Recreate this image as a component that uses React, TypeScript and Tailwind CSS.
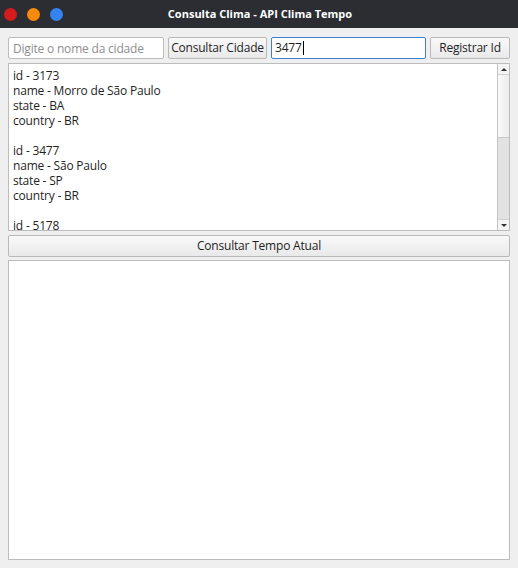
const lines = [
  "id - 3173",
  "name - Morro de São Paulo",
  "state - BA",
  "country - BR",
  "",
  "id - 3477",
  "name - São Paulo",
  "state - SP",
  "country - BR",
  "",
  "id - 5178",
  "name - Rio Branco",
  "state - AC",
  "country - BR",
];

export default function App() {
  return (
    <div
      className="w-[518px] h-[568px] bg-[#efefef] flex flex-col text-[12px] text-[#1f1f1f] tracking-[-0.2px]"
      style={{ fontFamily: "'Open Sans', 'Noto Sans', sans-serif" }}
    >
      {/* title bar */}
      <div className="h-[28px] bg-[#2c2d33] flex items-center relative shrink-0">
        <div className="flex items-center gap-[10px] pl-[4px]">
          <span className="w-[13px] h-[13px] rounded-full bg-[#d41c1c]" />
          <span className="w-[13px] h-[13px] rounded-full bg-[#f78a0c]" />
          <span className="w-[13px] h-[13px] rounded-full bg-[#3583f0]" />
        </div>
        <div className="absolute inset-0 flex items-center justify-center text-white font-bold text-[11px] pl-[2px] tracking-normal">
          Consulta Clima - API Clima Tempo
        </div>
      </div>

      <div className="flex flex-col px-[8px] pt-[9px] pb-[8px] flex-1">
        {/* top row */}
        <div className="flex items-center gap-[4px] h-[22px]">
          <input
            placeholder="Digite o nome da cidade"
            className="w-[156px] h-[22px] bg-white border border-[#bcbcbc] rounded-[2px] px-[4px] text-[12px] outline-none placeholder:text-[#8e8e8e]"
          />
          <button className="w-[99px] h-[22px] border border-[#b9b9b9] rounded-[2px] bg-gradient-to-b from-[#f9f9f9] to-[#e9e9e9] text-[12px] text-[#1f1f1f]">
            Consultar Cidade
          </button>
          <div className="w-[155px] h-[22px] bg-white border border-[#3d7fd6] rounded-[2px] px-[3px] flex items-center">
            <span>3477</span>
            <span className="w-px h-[14px] bg-black ml-[1px]" />
          </div>
          <button className="w-[80px] h-[22px] border border-[#b9b9b9] rounded-[2px] bg-gradient-to-b from-[#f9f9f9] to-[#e9e9e9] text-[12px] text-[#1f1f1f]">
            Registrar Id
          </button>
        </div>

        {/* text area */}
        <div className="mt-[4px] h-[168px] bg-white border border-[#bcbcbc] flex overflow-hidden">
          <div className="flex-1 pl-[4px] pt-[4px] leading-[15px] overflow-hidden">
            {lines.map((l, i) => (
              <div key={i} className="h-[15px] whitespace-pre">
                {l}
              </div>
            ))}
          </div>
          <div className="w-[12px] border-l border-[#c4c4c4] flex flex-col bg-[#e2e2e2]">
            <div className="h-[11px] bg-[#f4f4f4] border-b border-[#d0d0d0] flex items-center justify-center">
              <span className="w-0 h-0 border-l-[3px] border-r-[3px] border-b-[3px] border-l-transparent border-r-transparent border-b-[#333]" />
            </div>
            <div className="h-[63px] bg-gradient-to-r from-[#fafafa] to-[#ececec] border-b border-[#c8c8c8]" />
            <div className="flex-1" />
            <div className="h-[11px] bg-[#f4f4f4] border-t border-[#d0d0d0] flex items-center justify-center">
              <span className="w-0 h-0 border-l-[3px] border-r-[3px] border-t-[3px] border-l-transparent border-r-transparent border-t-[#333]" />
            </div>
          </div>
        </div>

        {/* button */}
        <button className="mt-[4px] h-[22px] border border-[#b9b9b9] rounded-[2px] bg-gradient-to-b from-[#f9f9f9] to-[#e9e9e9] text-[12px] text-[#1f1f1f]">
          Consultar Tempo Atual
        </button>

        {/* output box */}
        <div className="mt-[3px] flex-1 bg-white border border-[#bcbcbc]" />
      </div>
    </div>
  );
}
